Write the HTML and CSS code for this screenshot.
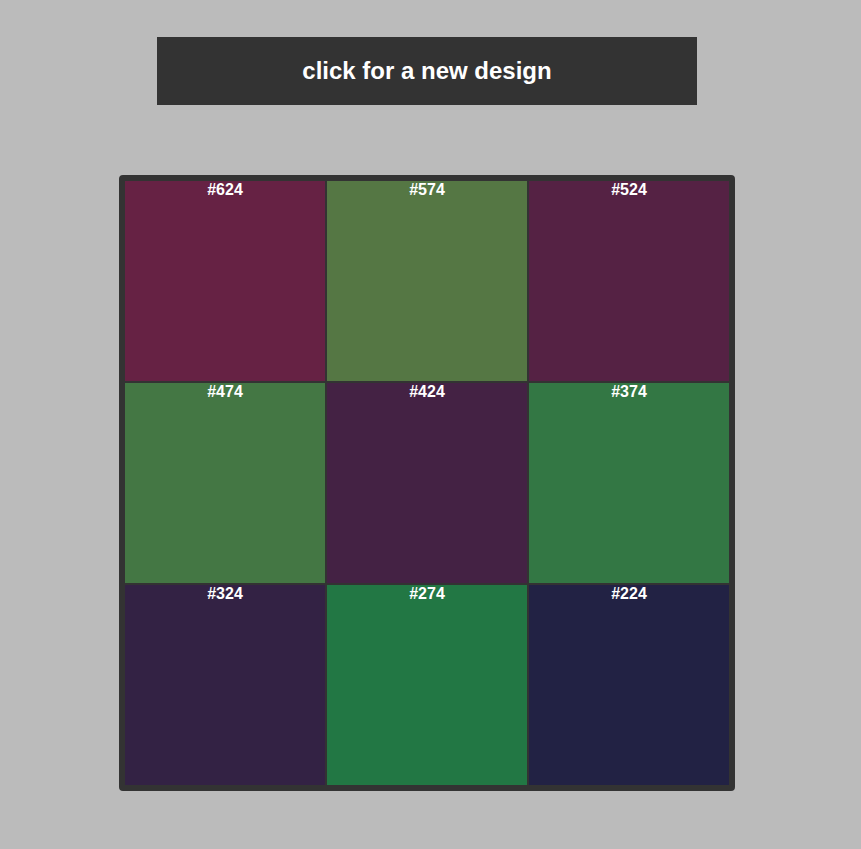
FILE: index.html
```html
<!DOCTYPE html>
<html>
<head>
<meta charset="utf-8">
<link rel="stylesheet" href="styles.css">
</head>
<body>
<div class="page">
  <button class="new-design">click for a new design</button>
  <div class="grid">
    <div class="cell c624">#624</div>
    <div class="cell c574">#574</div>
    <div class="cell c524">#524</div>
    <div class="cell c474">#474</div>
    <div class="cell c424">#424</div>
    <div class="cell c374">#374</div>
    <div class="cell c324">#324</div>
    <div class="cell c274">#274</div>
    <div class="cell c224">#224</div>
  </div>
</div>
</body>
</html>
```
FILE: styles.css
```css
html, body {
  margin: 0;
  padding: 0;
  background: #bbbbbb;
}
body {
  width: 854px;
  font-family: "Liberation Sans", Arial, sans-serif;
}
.page {
  display: flex;
  flex-direction: column;
  align-items: center;
  padding-top: 37px;
}
.new-design {
  width: 540px;
  height: 68px;
  background: #333333;
  color: #ffffff;
  border: none;
  font-family: "Liberation Sans", Arial, sans-serif;
  font-weight: bold;
  font-size: 24px;
  padding: 0;
  cursor: pointer;
}
.grid {
  margin-top: 70px;
  display: grid;
  grid-template-columns: repeat(3, 200px);
  grid-auto-rows: 200px;
  gap: 2px;
  padding: 2px;
  border: 4px solid #333333;
  border-radius: 4px;
  background: #333333;
}
.cell {
  color: #ffffff;
  font-weight: bold;
  font-size: 16px;
  text-align: center;
  line-height: 18px;
}
.c624 { background: #662244; }
.c574 { background: #557744; }
.c524 { background: #552244; }
.c474 { background: #447744; }
.c424 { background: #442244; }
.c374 { background: #337744; }
.c324 { background: #332244; }
.c274 { background: #227744; }
.c224 { background: #222244; }
```
